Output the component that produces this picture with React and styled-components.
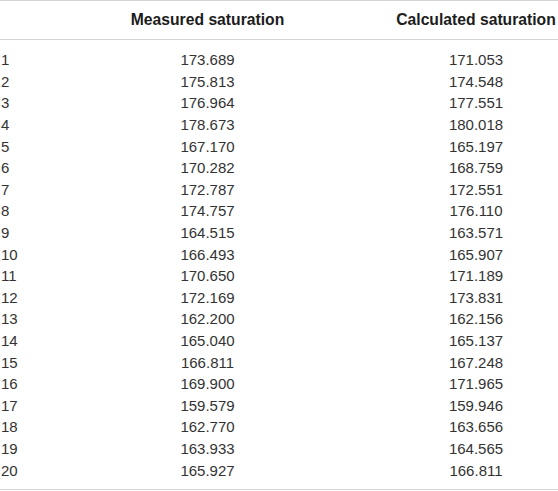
import React from 'react';
import styled, { createGlobalStyle } from 'styled-components';

const GlobalStyle = createGlobalStyle`
  body {
    margin: 0;
    background: #fff;
    font-family: "Liberation Sans", Arial, sans-serif;
  }
`;

const Table = styled.div`
  width: 558px;
  border-top: 1px solid #d4d4d4;
  border-bottom: 1px solid #d4d4d4;
  color: #333;
  font-size: 15px;
`;

const Head = styled.div`
  display: grid;
  grid-template-columns: 130px 155px 273px;
  height: 38px;
  align-items: center;
  border-bottom: 1px solid #d4d4d4;
  font-weight: bold;
  font-size: 15.7px;
  color: #1c1c1c;
`;

const Body = styled.div`
  padding: 9px 0 8px;
`;

const Row = styled.div`
  display: grid;
  grid-template-columns: 130px 155px 273px;
  height: 21.6px;
  align-items: center;
`;

const Cell = styled.div`
  text-align: ${(p) => (p.$center ? 'center' : 'left')};
  padding-left: ${(p) => p.$indent ?? 1}px;
  white-space: nowrap;
`;

const rows = [
  ['173.689', '171.053'],
  ['175.813', '174.548'],
  ['176.964', '177.551'],
  ['178.673', '180.018'],
  ['167.170', '165.197'],
  ['170.282', '168.759'],
  ['172.787', '172.551'],
  ['174.757', '176.110'],
  ['164.515', '163.571'],
  ['166.493', '165.907'],
  ['170.650', '171.189'],
  ['172.169', '173.831'],
  ['162.200', '162.156'],
  ['165.040', '165.137'],
  ['166.811', '167.248'],
  ['169.900', '171.965'],
  ['159.579', '159.946'],
  ['162.770', '163.656'],
  ['163.933', '164.565'],
  ['165.927', '166.811'],
];

export default function App() {
  return (
    <>
      <GlobalStyle />
      <Table>
        <Head>
          <Cell />
          <Cell $center $indent={0}>Measured saturation</Cell>
          <Cell $center $indent={109}>Calculated saturation</Cell>
        </Head>
        <Body>
          {rows.map(([measured, calculated], i) => (
            <Row key={i}>
              <Cell>{i + 1}</Cell>
              <Cell $center $indent={0}>{measured}</Cell>
              <Cell $center $indent={109}>{calculated}</Cell>
            </Row>
          ))}
        </Body>
      </Table>
    </>
  );
}
